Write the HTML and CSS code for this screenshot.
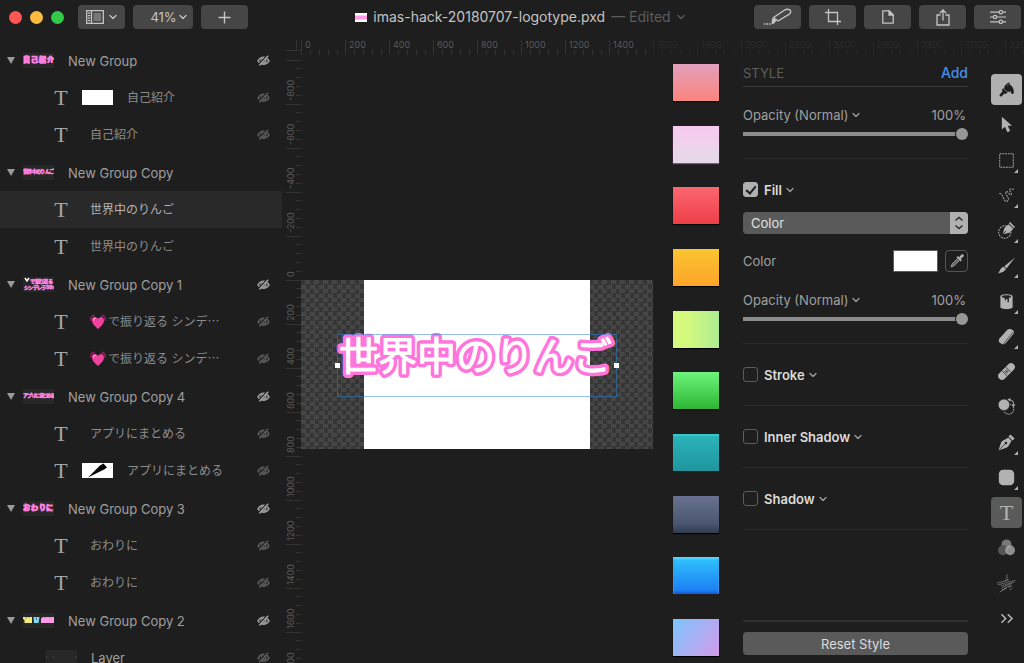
FILE: index.html
```html
<!DOCTYPE html>
<html lang="ja">
<head>
    <meta charset="UTF-8">
    <meta name="viewport" content="width=device-width, initial-scale=1.0">
    <title>imas-hack-20180707-logotype.pxd</title>
    <link rel="stylesheet" href="styles.css">
</head>
<body>
    <svg class="defs" aria-hidden="true">
        <symbol id="eye" viewBox="0 0 13 11">
            <path d="M1 5.800C2.600 3.200 4.400 2.200 6.500 2.200S10.400 3.200 12 5.800C10.400 8.200 8.600 9.200 6.500 9.200S2.600 8.200 1 5.800Z" fill="none" stroke="currentColor" stroke-width="1.500"/>
            <circle cx="6.500" cy="5.700" r="2.200" fill="none" stroke="currentColor" stroke-width="1.500"/>
            <path d="M1.500 9.500 10.200 .3" stroke="#1e1e1e" stroke-width="1.200"/>
            <path d="M2.200 10.500 11.200 .8" stroke="currentColor" stroke-width="1.400"/>
        </symbol>
        <symbol id="chevron" viewBox="0 0 8 6">
            <path d="M1 1.500 4 4.500 7 1.500" fill="none" stroke="currentColor" stroke-width="1.300" stroke-linecap="round" stroke-linejoin="round"/>
        </symbol>
        <symbol id="heart" viewBox="0 0 16 16">
            <path d="M1 6C.6 3.500 1.800 1.800 4 1.500M15 6C15.400 3.500 14.200 1.800 12 1.500" fill="none" stroke="#8c1d57" stroke-width="1.800" stroke-linecap="round"/>
            <path d="M8 15C4.500 12 2 9.700 2 6.500 2 4.300 3.300 3 5 3 6.500 3 7.500 4 8 5 8.500 4 9.500 3 11 3 12.700 3 14 4.300 14 6.500 14 9.700 11.500 12 8 15Z" fill="#f0439f"/>
            <path d="M3.500 6C3.500 4.800 4.200 4.200 5.200 4.200" fill="none" stroke="#ff9bd0" stroke-width="1.200" stroke-linecap="round"/>
        </symbol>
    </svg>

    <header class="titlebar">
        <div class="lights">
            <button class="light close" aria-label="Close"></button>
            <button class="light minimize" aria-label="Minimize"></button>
            <button class="light zoom" aria-label="Zoom"></button>
        </div>
        <div class="bar-buttons">
            <button class="bar-btn" aria-label="Sidebar">
                <svg width="18" height="14" viewBox="0 0 18 14" fill="none" stroke="currentColor">
                    <path d="M.7.700H17.300V13.300H.7ZM5.500 1V13" stroke-width="1.300"/>
                    <path d="M7.500 3H15V11H7.500Z" fill="#777" stroke="none"/>
                    <path d="M2 3.200H4.300M2 5.700H4.300M2 8.200H4.300M2 10.700H4.300" stroke-width="1.200"/>
                </svg>
                <svg width="8" height="6"><use href="#chevron"/></svg>
            </button>
            <button class="bar-btn zoom-btn">41%<svg width="8" height="6"><use href="#chevron"/></svg></button>
            <button class="bar-btn" aria-label="New layer">
                <svg width="13" height="13" viewBox="0 0 13 13"><path d="M6.500 .5V12.500M.5 6.500H12.500" stroke="currentColor" stroke-width="1.400"/></svg>
            </button>
        </div>
        <h1 class="doc-title">
            <svg width="12" height="9" viewBox="0 0 12 9"><path d="M0 0H12V9H0Z" fill="#fff"/><path d="M0 2.500H12V6.500H0Z" fill="#ff9be6"/></svg>
            <span>imas-hack-20180707-logotype.pxd</span>
            <small>— Edited</small>
            <svg class="dim" width="8" height="6"><use href="#chevron"/></svg>
        </h1>
        <div class="bar-buttons">
            <button class="bar-btn" aria-label="Tools">
                <svg width="28" height="18" viewBox="0 0 28 18" fill="none" stroke="currentColor" stroke-width="1.400">
                    <path d="M9.500 9.500 20 2.500C22 1.300 24.500 1 26 2 27.300 3 26.800 5 25 6.300L14 13 9.500 9.500Z" stroke-linejoin="round"/>
                    <path d="M8.800 9.500 12.500 12.800 10 15.500 7.500 16.500 7.800 12Z" fill="currentColor" stroke="none"/>
                    <path d="M0 16H1.500M2.500 16H4M5 16H6.500"/>
                </svg>
            </button>
            <button class="bar-btn" aria-label="Crop">
                <svg width="18" height="18" viewBox="0 0 18 18" fill="none" stroke="currentColor" stroke-width="1.300"><path d="M4.500 1V13.500H17M1 4.500H13.500V17"/></svg>
            </button>
            <button class="bar-btn" aria-label="Document">
                <svg width="12" height="14" viewBox="0 0 12 14" fill="none" stroke="currentColor" stroke-width="1.300"><path d="M.8.800H7L11.200 5V13.200H.8Z" stroke-linejoin="round"/><path d="M7 1V5H11Z" fill="currentColor"/></svg>
            </button>
            <button class="bar-btn" aria-label="Share">
                <svg width="14" height="17" viewBox="0 0 14 17" fill="none" stroke="currentColor" stroke-width="1.300"><path d="M4.500 6H1V16H13V6H9.500M7 11.500V1.200M3.800 4.200 7 1 10.200 4.200"/></svg>
            </button>
            <button class="bar-btn" aria-label="Settings">
                <svg width="16" height="14" viewBox="0 0 16 14" fill="none" stroke="currentColor" stroke-width="1.200"><path d="M0 2.200H9M12.600 2.200H16M0 7H3.200M6.800 7H16M0 11.800H9M12.600 11.800H16"/><circle cx="10.800" cy="2.200" r="1.700"/><circle cx="5" cy="7" r="1.700"/><circle cx="10.800" cy="11.800" r="1.700"/></svg>
            </button>
        </div>
    </header>

    <main class="window">
        <aside class="layers">
            <div class="group">
                <div class="row">
                    <button class="disclosure" aria-label="Toggle group"></button>
                    <svg class="thumb art" viewBox="0 0 31 15"><text x="0 8 16 24" y="9">自己紹介</text></svg>
                    <span class="group-name">New Group</span>
                    <button class="eye on" aria-label="Show layer"><svg><use href="#eye"/></svg></button>
                </div>
                <div class="row child">
                    <span class="type">T</span>
                    <svg class="thumb white" viewBox="0 0 31 15"></svg>
                    <span class="name">自己紹介</span>
                    <button class="eye" aria-label="Show layer"><svg><use href="#eye"/></svg></button>
                </div>
                <div class="row child">
                    <span class="type">T</span>
                    <span class="name">自己紹介</span>
                    <button class="eye" aria-label="Show layer"><svg><use href="#eye"/></svg></button>
                </div>
            </div>
            <div class="group">
                <div class="row">
                    <button class="disclosure" aria-label="Toggle group"></button>
                    <svg class="thumb art small" viewBox="0 0 31 15"><text x="0 4 9 13 17 22 26" y="8">世界中のりんご</text></svg>
                    <span class="group-name">New Group Copy</span>
                </div>
                <div class="row child selected">
                    <span class="type">T</span>
                    <span class="name">世界中のりんご</span>
                </div>
                <div class="row child">
                    <span class="type">T</span>
                    <span class="name">世界中のりんご</span>
                </div>
            </div>
            <div class="group">
                <div class="row">
                    <button class="disclosure" aria-label="Toggle group"></button>
                    <svg class="thumb art small" viewBox="0 0 31 15"><text x="7 12 16 20 25" y="6">で振り返る</text><text x="1 5 10 14 18 23 26" y="12">シンデレラ5th</text><path d="M2 1 4 4 6 1" stroke="#fff" stroke-width="1.500" fill="none"/></svg>
                    <span class="group-name">New Group Copy 1</span>
                    <button class="eye on" aria-label="Show layer"><svg><use href="#eye"/></svg></button>
                </div>
                <div class="row child">
                    <span class="type">T</span>
                    <span class="name"><svg class="heart"><use href="#heart"/></svg>で振り返る シンデ⋯</span>
                    <button class="eye" aria-label="Show layer"><svg><use href="#eye"/></svg></button>
                </div>
                <div class="row child">
                    <span class="type">T</span>
                    <span class="name"><svg class="heart"><use href="#heart"/></svg>で振り返る シンデ⋯</span>
                    <button class="eye" aria-label="Show layer"><svg><use href="#eye"/></svg></button>
                </div>
            </div>
            <div class="group">
                <div class="row">
                    <button class="disclosure" aria-label="Toggle group"></button>
                    <svg class="thumb art small" viewBox="0 0 31 15"><text x="0 4 8 12 16 19 23 27" y="8">アプリにまとめる</text></svg>
                    <span class="group-name">New Group Copy 4</span>
                    <button class="eye on" aria-label="Show layer"><svg><use href="#eye"/></svg></button>
                </div>
                <div class="row child">
                    <span class="type">T</span>
                    <span class="name">アプリにまとめる</span>
                    <button class="eye" aria-label="Show layer"><svg><use href="#eye"/></svg></button>
                </div>
                <div class="row child">
                    <span class="type">T</span>
                    <svg class="thumb white" viewBox="0 0 31 15"><path d="M6 14.500 18 2.500 21.500.500 25 4.500 22 6.500Z" fill="#000"/></svg>
                    <span class="name">アプリにまとめる</span>
                    <button class="eye" aria-label="Show layer"><svg><use href="#eye"/></svg></button>
                </div>
            </div>
            <div class="group">
                <div class="row">
                    <button class="disclosure" aria-label="Toggle group"></button>
                    <svg class="thumb art" viewBox="0 0 31 15"><text x="0 8 16 23" y="9">おわりに</text></svg>
                    <span class="group-name">New Group Copy 3</span>
                    <button class="eye on" aria-label="Show layer"><svg><use href="#eye"/></svg></button>
                </div>
                <div class="row child">
                    <span class="type">T</span>
                    <span class="name">おわりに</span>
                    <button class="eye" aria-label="Show layer"><svg><use href="#eye"/></svg></button>
                </div>
                <div class="row child">
                    <span class="type">T</span>
                    <span class="name">おわりに</span>
                    <button class="eye" aria-label="Show layer"><svg><use href="#eye"/></svg></button>
                </div>
            </div>
            <div class="group">
                <div class="row">
                    <button class="disclosure" aria-label="Toggle group"></button>
                    <svg class="thumb" viewBox="0 0 31 15"><path d="M0 4H9V10H1.500V7L0 6Z" fill="#f3ec7c"/><path d="M10.500 4H16.500L15.500 10H11Z" fill="#7fdcf5"/><path d="M18 5.500 20 4H31V10H18Z" fill="#ff9be6"/><path d="M3 4V6M6 4V5M13.500 4V7M22 4V5M27 4V5" stroke="#444" stroke-width=".6"/></svg>
                    <span class="group-name">New Group Copy 2</span>
                    <button class="eye on" aria-label="Show layer"><svg><use href="#eye"/></svg></button>
                </div>
                <div class="row child raster">
                    <svg class="thumb" viewBox="0 0 31 15"><path d="M0 7H1M7 7H8" stroke="#5c5a2c"/><path d="M29 7H31" stroke="#5a3454"/></svg>
                    <span class="group-name">Layer</span>
                    <button class="eye" aria-label="Show layer"><svg><use href="#eye"/></svg></button>
                </div>
            </div>
        </aside>

        <div class="workspace">
            <div class="ruler-top">
                <div class="corner"></div>
                <span>0</span><span>200</span><span>400</span><span>600</span><span>800</span><span>1000</span><span>1200</span><span>1400</span>
                <span class="faint">1600</span><span class="faint">1800</span><span class="faint">2000</span><span class="faint">2200</span><span class="faint">2400</span><span class="faint">2600</span><span class="faint">2800</span><span class="faint">3000</span><span class="faint">3200</span>
            </div>
            <div class="panes">
                <div class="ruler-left">
                    <i></i>
                    <span>-800</span><span>-600</span><span>-400</span><span>-200</span><span>0</span><span>200</span><span>400</span><span>600</span><span>800</span><span>1000</span><span>1200</span><span>1400</span><span>1600</span><span>1800</span>
                </div>
                <section class="canvas">
                    <div class="artboard">
                        <div class="paper"></div>
                        <svg class="logotype" viewBox="0 0 352 169">
                            <defs><text id="logo" x="38" y="90">世界中のりんご</text></defs>
                            <use class="outline" href="#logo"/>
                            <use class="face" href="#logo"/>
                        </svg>
                        <div class="selection"><b></b><b></b></div>
                    </div>
                </section>
                <div class="presets">
                    <button class="preset salmon" aria-label="Salmon"></button>
                    <button class="preset blush" aria-label="Blush"></button>
                    <button class="preset red" aria-label="Red"></button>
                    <button class="preset amber" aria-label="Amber"></button>
                    <button class="preset lime" aria-label="Lime"></button>
                    <button class="preset green" aria-label="Green"></button>
                    <button class="preset teal" aria-label="Teal"></button>
                    <button class="preset slate" aria-label="Slate"></button>
                    <button class="preset blue" aria-label="Blue"></button>
                    <button class="preset violet" aria-label="Violet"></button>
                </div>

                <section class="style-panel">
                    <div class="panel-head">
                        <h2>STYLE</h2>
                        <button class="add">Add</button>
                    </div>
                    <div class="section opacity-all">
                        <div class="line">
                            <label for="opacity">Opacity (Normal) <svg width="8" height="6"><use href="#chevron"/></svg></label>
                            <output for="opacity">100%</output>
                        </div>
                        <input type="range" id="opacity" value="100">
                    </div>
                    <div class="section fill">
                        <label class="effect"><input type="checkbox" checked>Fill <svg width="8" height="6"><use href="#chevron"/></svg></label>
                        <div class="select">
                            <select aria-label="Fill type"><option>Color</option><option>Gradient</option></select>
                            <svg width="18" height="22" viewBox="0 0 18 22"><path d="M0 0H14Q18 0 18 4V18Q18 22 14 22H0Z" fill="#b0b0b0"/><path d="M5.500 8.500 9 5.500 12.500 8.500M5.500 13.500 9 16.500 12.500 13.500" fill="none" stroke="#2a2a2a" stroke-width="1.400"/></svg>
                        </div>
                        <div class="line color-line">
                            <span>Color</span>
                            <button class="well" aria-label="Fill color"></button>
                            <button class="dropper" aria-label="Pick color">
                                <svg width="16" height="16" viewBox="0 0 16 16"><path d="M10 4.200 12.500 1.500C13.800.500 15.500 2.200 14.500 3.500L11.800 6Z" fill="#b0b0b0"/><path d="M8.200 3.800 12.200 7.800" stroke="#b0b0b0" stroke-width="2"/><path d="M8.800 5.300 3.200 11 2 14 5 12.800 10.700 7.200" fill="#666" stroke="#999"/></svg>
                            </button>
                        </div>
                        <div class="line">
                            <label for="fill-opacity">Opacity (Normal) <svg width="8" height="6"><use href="#chevron"/></svg></label>
                            <output for="fill-opacity">100%</output>
                        </div>
                        <input type="range" id="fill-opacity" value="100">
                    </div>
                    <div class="section"><label class="effect"><input type="checkbox">Stroke <svg width="8" height="6"><use href="#chevron"/></svg></label></div>
                    <div class="section"><label class="effect"><input type="checkbox">Inner Shadow <svg width="8" height="6"><use href="#chevron"/></svg></label></div>
                    <div class="section"><label class="effect"><input type="checkbox">Shadow <svg width="8" height="6"><use href="#chevron"/></svg></label></div>
                    <div class="panel-foot"><button class="reset">Reset Style</button></div>
                </section>

                <nav class="tools">
                    <button class="tool active" aria-label="Style">
                        <svg viewBox="0 0 20 20"><path d="M8 5.500C9.500 3.500 12 2 13.500 1.500 13.200 3 13.500 3.800 15 5 17.800 7 19 11 18.500 14 18.200 16 15.600 15.700 15.400 13.500L15 11.500 13.700 13.500 12.200 12 11 12.800 7 8.800Z"/><path d="M6 8.500 11.200 13.700 9.500 15C8.300 15.200 7.500 14.700 6.500 15.700L4.500 17.900C2.800 19 1 17.200 2.200 15.500L4.500 13.300C5.300 12.500 4.800 11.500 5 9.800Z"/><path d="M10.500 5.500 12.500 3.500" stroke="#b0b0b0" stroke-width=".8"/></svg>
                    </button>
                    <button class="tool" aria-label="Arrange">
                        <svg viewBox="0 0 20 20"><path d="M4.500 .8V15.800L8.200 12.500 11 19.200 14.300 17.700 11.500 11.500H16.500Z"/></svg>
                    </button>
                    <button class="tool more" aria-label="Select">
                        <svg viewBox="0 0 20 20"><path class="ln" d="M2 2H18V18H2Z" stroke-dasharray="2.200 1"/></svg>
                    </button>
                    <button class="tool more" aria-label="Free select">
                        <svg viewBox="0 0 20 20"><path class="ln" d="M1.500 8C3.500 6.500 4.500 9 6 12 7.500 16 9.500 19 12 15.500 13.500 13 7.500 8 9.500 5.500 11.500 3.500 13.500 11 15.500 9 17 7 12 4 14 2.500 15.500 1.500 17 4.500 18.500 2" stroke-dasharray="2.400 1"/></svg>
                    </button>
                    <button class="tool more" aria-label="Quick select">
                        <svg viewBox="0 0 20 20"><circle class="ln" cx="8" cy="11.800" r="7.300" stroke-dasharray="2.400 1"/><path d="M5.500 14.500 7.500 7 12.500 2.500 18 8 13.500 12.500Z"/><path d="M12.700 1.300 14.200 0 20 6 18.700 7.400Z"/><path d="M5.500 14.500 9.500 10.500" stroke="#1e1e1e"/></svg>
                    </button>
                    <button class="tool more" aria-label="Paint">
                        <svg viewBox="0 0 20 20"><path d="M20 .5 10 13.500 7.500 11Z"/><path d="M6.800 11.500 9.400 14.100C7.500 17.500 4.500 18 0 19.500 2.200 16.800 2.500 13 6.800 11.500Z"/></svg>
                    </button>
                    <button class="tool more" aria-label="Fill">
                        <svg viewBox="0 0 20 20"><path d="M2.800 4C2.800.500 17.200.500 17.200 4V16.500C17.200 19.800 2.800 19.800 2.800 16.500Z"/><path d="M4.500 4C5.500 2.300 14.500 2.300 15.500 4 15.500 5 13.500 5.500 12.800 6V11H11.200V7H9.500V8.500H8V6C6 5.500 4.500 5 4.500 4Z" fill="#252525"/></svg>
                    </button>
                    <button class="tool more" aria-label="Erase">
                        <svg viewBox="0 0 20 20"><path d="M1.500 12.500 11 2C12 1 13.500.800 15 1.300L17.500 2.500C19.200 3.500 19.200 5.500 18 7L9 18C7.500 19.500 6 19.500 4.500 18.700L2.500 17.500C.5 16 .5 14 1.500 12.500Z"/><path class="cut" d="M18 4.500C17 6 8.500 15.500 6.500 19"/></svg>
                    </button>
                    <button class="tool" aria-label="Repair">
                        <svg viewBox="0 0 20 20"><rect x="-2" y="5.500" width="24" height="9" rx="4.500" transform="rotate(-45 10 10)"/><path class="cut" d="M4.500 9 11 15.500M9 4.500 15.500 11"/><path d="M7.500 10H12.500M10 7.500V12.500M8.200 8.200 11.800 11.800M11.800 8.200 8.200 11.800" stroke="#1e1e1e" stroke-width=".9" stroke-dasharray="1 1"/></svg>
                    </button>
                    <button class="tool" aria-label="Clone">
                        <svg viewBox="0 0 20 20"><circle class="ln" cx="12.500" cy="13" r="6" stroke-dasharray="1.800 .8"/><circle cx="7" cy="8" r="6.800" stroke="#1e1e1e" stroke-width=".8"/><path class="ln" d="M13 2C17 2 18.500 4.500 18.500 8.500"/><path d="M11 1.800 14.500 0V4ZM16.200 7.500H20.500L18.500 10.500Z"/></svg>
                    </button>
                    <button class="tool more" aria-label="Pen">
                        <svg viewBox="0 0 20 20"><path d="M.5 19.500 3.800 9.500C5 7.500 8.500 6.500 12 4L16 8C13.500 11.500 12.500 15 10.500 16Z"/><path d="M12.300 2.800 14.700.500 19.500 5.300 17.200 7.700Z"/><path class="cut" d="M1.500 18.500 8.800 11.200"/><circle cx="9.300" cy="10.700" r="1.500" fill="#1e1e1e"/></svg>
                    </button>
                    <button class="tool more" aria-label="Shape">
                        <svg viewBox="0 0 20 20"><rect x="1" y="1" width="18" height="18" rx="5"/></svg>
                    </button>
                    <button class="tool current" aria-label="Type">T</button>
                    <button class="tool" aria-label="Color adjustments">
                        <svg viewBox="0 0 20 20"><circle cx="10" cy="6.300" r="5.800" fill="#777"/><circle cx="5.800" cy="13.200" r="5.800" fill="#555"/><circle cx="14.200" cy="13.200" r="5.800" fill="#aaa" fill-opacity=".8"/></svg>
                    </button>
                    <button class="tool" aria-label="Effects">
                        <svg viewBox="0 0 20 20"><path d="M10.500-.5V3M9 4 11.700 2.500M8 7 12.500 4.500M-1 9.500 12.500 6M0 11.500 20.500 6.300M3.500 12.800 19 8.500M4.500 15 16 10M4.500 17.500 15.500 12M2 20 10 15.500M12.500 14.500 16.500 13M14 17.500 17 15.500" stroke="#858585" stroke-width="1" stroke-dasharray="2 .4" fill="none"/></svg>
                    </button>
                    <button class="tool" aria-label="More tools">
                        <svg viewBox="0 0 20 20"><path d="M4 5 9 10 4 15M11.500 5 16.500 10 11.500 15" fill="none" stroke="currentColor" stroke-width="1.900"/></svg>
                    </button>
                </nav>
            </div>
        </div>
    </main>
</body>
</html>
```

FILE: styles.css
```css
* { box-sizing: border-box; }
body { margin: 0; height: 100vh; display: flex; flex-direction: column; overflow: hidden; background: #1e1e1e; color: #a0a0a0; font: 13px/16px Inter, "Noto Sans CJK JP", sans-serif; }
button { margin: 0; padding: 0; border: 0; background: none; color: inherit; font: inherit; }
svg { display: block; flex: none; }
.defs { position: absolute; width: 0; height: 0; }

/* title bar */
.titlebar { display: flex; align-items: center; height: 34px; padding: 0 3px 0 9px; flex: none; }
.lights { display: flex; gap: 8px; margin-right: 14px; }
.light { width: 13px; height: 13px; border-radius: 50%; }
.close { background: #fc5753; }
.minimize { background: #fdbc40; }
.zoom { background: #36c84b; }
.bar-buttons { display: flex; gap: 8px; }
.bar-btn { display: flex; align-items: center; justify-content: center; gap: 5px; width: 47px; height: 24px; border-radius: 4px; background: #464646; color: #c4c4c4; }
.zoom-btn { width: 60px; gap: 2px; padding-left: 11px; }
.doc-title { flex: 1; display: flex; align-items: center; justify-content: center; gap: 6px; margin: 0; padding-left: 38px; font-size: 14px; font-weight: 400; color: #c4c4c4; white-space: nowrap; }
.doc-title small { font-size: 14px; color: #5c5c5c; }
.dim { color: #5c5c5c; }

.window { flex: 1; display: flex; min-height: 0; }

/* layers */
.layers { width: 282px; flex: none; padding-top: 8px; overflow: hidden; }
.group { margin-bottom: 1px; }
.row { display: flex; align-items: center; height: 37px; padding: 0 12px 0 7px; }
.disclosure { width: 0; height: 0; margin-right: 8px; border: 4px solid transparent; border-top: 7px solid #9a9a9a; border-bottom: 0; }
.thumb { width: 31px; height: 15px; background: #282828; }
.thumb.white { background: #fff; margin-right: 14px; }
.art { font-size: 7px; font-weight: 700; fill: #ffb3ee; stroke: #ff7fe0; stroke-width: 1; }
.small { font-size: 5px; stroke-width: .5; }
.group-name { margin-left: 14px; }
.child { padding-left: 54px; }
.type { width: 14px; margin-right: 14px; text-align: center; font: 22px/22px "Liberation Serif", serif; color: #a6a6a6; }
.name { display: flex; align-items: center; font-size: 12px; color: #8c8c8c; }
.type + .name { margin-left: 8px; }
.selected { background: #292929; }
.selected .name { color: #b4b4b4; }
.raster { padding-left: 46px; }
.heart { width: 16px; height: 16px; margin-right: 2px; }
.eye { margin-left: auto; color: #5a5a5a; }
.eye.on { color: #a0a0a0; }
.eye svg { width: 13px; height: 11px; }

/* rulers */
.workspace { flex: 1; min-width: 0; display: flex; flex-direction: column; padding-left: 4px; }
.ruler-top, .ruler-left { font-size: 9px; line-height: 9px; color: #5a5a5a; overflow: hidden; }
.ruler-top { display: flex; height: 22px; padding-top: 6px; flex: none; }
.corner { width: 15px; height: 11px; flex: none; border-bottom: 1px solid #333; background: linear-gradient(#333, #333) 10px 0 / 1px 100% no-repeat; }
.ruler-top span { flex: 0 0 44px; height: 15px; padding-left: 3px; border-left: 1px solid #333; background: repeating-linear-gradient(to right, transparent 0 8px, #333 8px 9px) 0 100% / 100% 5px no-repeat; }
.ruler-top .faint { color: #2b2b2b; border-color: #252525; background-image: repeating-linear-gradient(to right, transparent 0 8px, #252525 8px 9px); }
.panes { flex: 1; display: flex; min-height: 0; }
.ruler-left { width: 15px; flex: none; }
.ruler-left i { display: block; height: 5px; border-bottom: 1px solid #333; }
.ruler-left span { display: block; width: 15px; height: 44px; padding: 3px 0 0 6px; writing-mode: vertical-rl; transform: rotate(180deg); border-top: 1px solid #333; background: repeating-linear-gradient(to bottom, transparent 0 8px, #333 8px 9px) 0 0 / 5px 100% no-repeat; }

/* canvas */
.canvas { flex: 1; min-width: 0; display: flex; align-items: center; padding-top: 10px; }
.artboard { position: relative; width: 352px; height: 169px; background: conic-gradient(#464646 25%, #363636 0 50%, #464646 0 75%, #363636 0) 0 0 / 9px 9px; }
.paper { width: 226px; height: 100%; margin-left: 63px; background: #fff; }
.logotype { position: absolute; top: 0; left: 0; width: 352px; height: 169px; font: 400 39px "Noto Sans CJK JP", sans-serif; stroke-linejoin: round; }
.outline { fill: #ff75dc; stroke: #ff75dc; stroke-width: 8px; }
.face { fill: #fff; stroke: #fff; stroke-width: 1px; }
.selection { position: absolute; top: 54px; left: 36px; width: 280px; height: 63px; border: 1px solid rgba(37, 132, 219, .5); display: flex; align-items: center; justify-content: space-between; }
.selection b { width: 5px; height: 5px; margin: 0 -3px; background: #fff; }

/* presets */
.presets { display: flex; flex-direction: column; justify-content: space-between; flex: none; padding: 8px 0 7px; margin-right: 24px; }
.preset { width: 46px; height: 37px; box-shadow: 0 1px 1px #000; }
.salmon { background: linear-gradient(#e3a0bd, #fb857c); }
.blush { background: linear-gradient(#f8c9ee, #e4dbe8); box-shadow: 0 1px 1px #a040a0; }
.red { background: linear-gradient(#fb6770, #ef3e48); }
.amber { background: linear-gradient(#fbc531, #fda428); }
.lime { background: linear-gradient(90deg, #d5f97d 30%, #aeec92); }
.green { background: linear-gradient(#6df57c, #2cb632); }
.teal { background: linear-gradient(#2ab5bb, #20959d); box-shadow: inset 0 2px 1px #35c9cb; }
.slate { background: linear-gradient(#68728e, #4a5670 75%, #303c50); }
.blue { background: linear-gradient(#30c5fd, #1b78f2); box-shadow: inset 0 2px 2px #5bd6ff, inset 0 -2px 2px #1660d8; }
.violet { background: linear-gradient(125deg, #7cc5fb, #d29aea); }

/* style panel */
.style-panel { display: flex; flex-direction: column; flex: 0 0 225px; margin-right: 23px; padding-bottom: 8px; }
.panel-head { display: flex; justify-content: space-between; align-items: center; height: 31px; padding-top: 3px; border-bottom: 1px solid #3a3a3a; }
.panel-head h2 { margin: 0; font-size: 13px; font-weight: 400; color: #5e5e5e; }
.add { font-size: 14px; font-weight: 500; color: #4390ea; }
.section { padding: 22px 0; border-bottom: 1px solid #292929; }
.opacity-all { padding: 20px 0 18px; }
.fill { padding-bottom: 18px; }
.line { display: flex; align-items: center; justify-content: space-between; }
.line label, .effect { display: flex; align-items: center; gap: 4px; }
output { padding-right: 2px; }
input[type="range"] { appearance: none; display: block; width: 100%; height: 12px; margin: 5px 0 0; background: linear-gradient(#8c8c8c, #8c8c8c) 0 50% / 100% 4px no-repeat; border-radius: 2px; }
input[type="range"]::-webkit-slider-thumb { appearance: none; width: 12px; height: 12px; border-radius: 50%; background: #979797; box-shadow: 0 0 0 1px #1e1e1e; }
.effect { font-weight: 600; height: 17px; color: #dcdcdc; }
.effect svg { color: #a0a0a0; }
input[type="checkbox"] { appearance: none; width: 15px; height: 15px; margin: 0 2px 0 0; border: 1px solid #5c5c5c; border-radius: 3px; display: grid; place-items: center; }
input[type="checkbox"]:checked { background: #b0b0b0; border-color: #b0b0b0; }
input[type="checkbox"]:checked::after { content: ""; width: 4px; height: 8px; margin-bottom: 2px; border: solid #1e1e1e; border-width: 0 2px 2px 0; transform: rotate(40deg); }
.select { display: grid; align-items: center; margin: 14px 0 16px; }
.select > * { grid-area: 1 / 1; }
.select svg { justify-self: end; pointer-events: none; }
select { appearance: none; width: 100%; height: 22px; padding: 0 8px; border: 0; border-radius: 4px; background: #5a5a5a; color: #e2e2e2; font: inherit; }
.color-line { gap: 7px; margin-bottom: 20px; }
.color-line span { margin-right: auto; }
.well { width: 45px; height: 22px; background: #fff; border: 1px solid #5c5c5c; }
.dropper { display: grid; place-items: center; width: 23px; height: 22px; border: 1px solid #555; border-radius: 4px; }
.panel-foot { margin-top: auto; padding-top: 10px; border-top: 2px solid #303030; }
.reset { width: 100%; height: 23px; border-radius: 4px; background: #5a5a5a; color: #dcdcdc; }

/* tools */
.tools { display: flex; flex-direction: column; justify-content: space-between; flex: none; padding: 18px 2px 29px 0; }
.tool { position: relative; display: grid; place-items: center; width: 31px; height: 31px; border-radius: 4px; color: #b2b2b2; fill: #b2b2b2; }
.tool svg { width: 17px; height: 17px; overflow: visible; }
.active { background: #b0b0b0; fill: #1e1e1e; }
.current { background: #5a5a5a; font: 22px/22px "Liberation Serif", serif; }
.more::after { content: ""; position: absolute; right: 4px; bottom: 3px; border: 2px solid transparent; border-right-color: #b2b2b2; border-bottom-color: #b2b2b2; }
.ln { fill: none; stroke: #a6a6a6; stroke-width: 1.2; }
.cut { fill: none; stroke: #1e1e1e; stroke-width: .8; }
```
